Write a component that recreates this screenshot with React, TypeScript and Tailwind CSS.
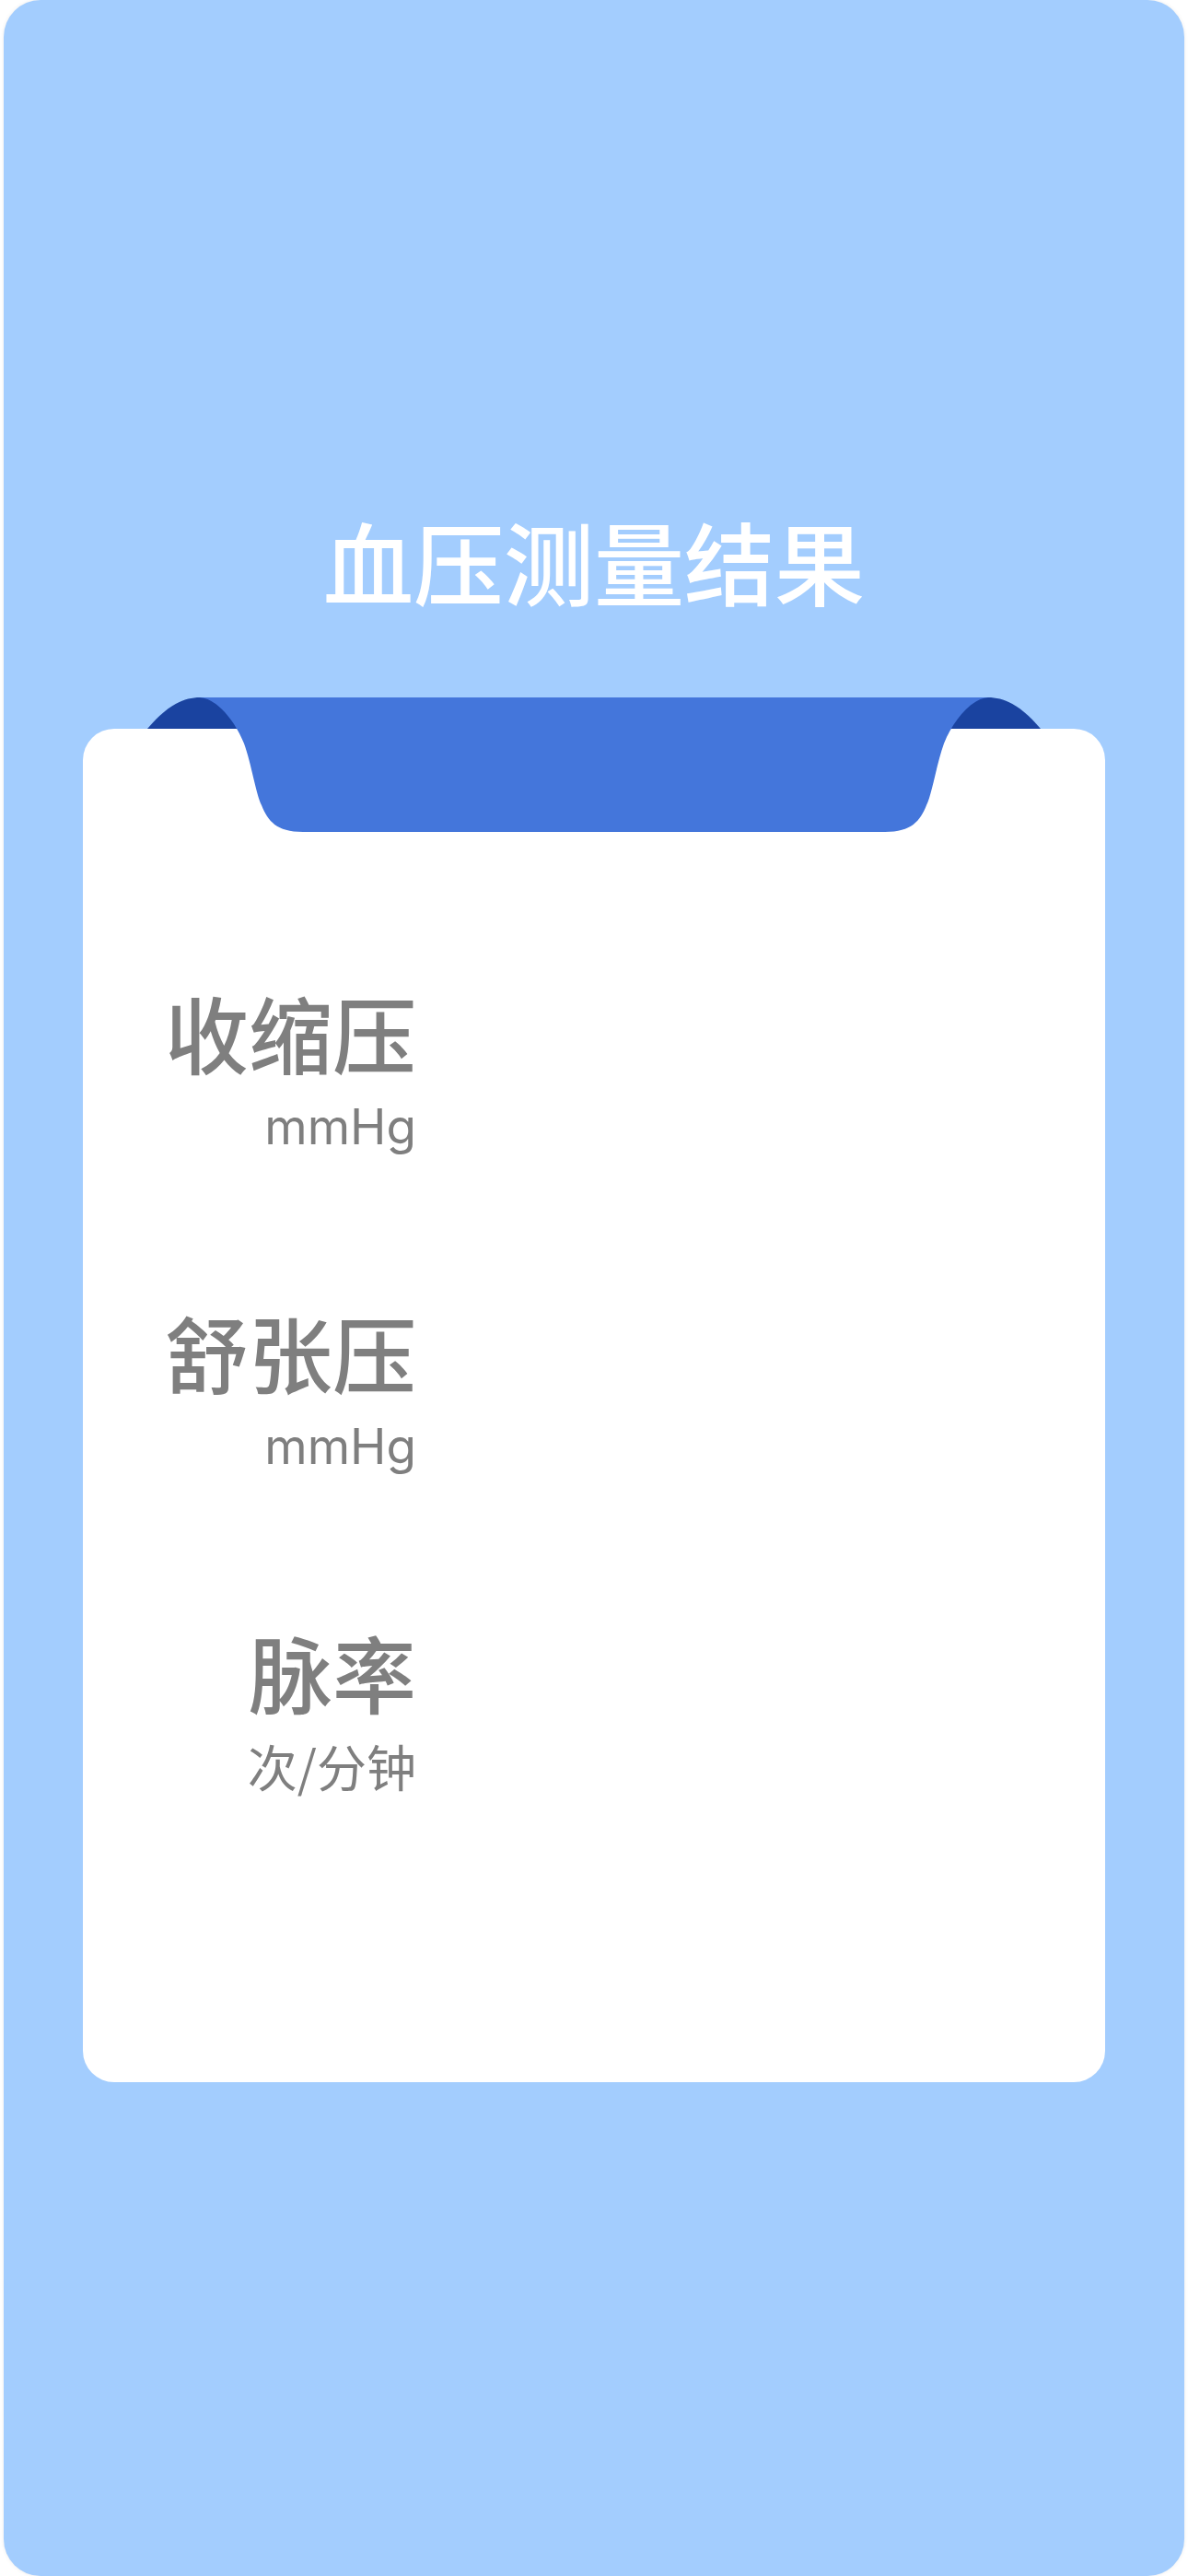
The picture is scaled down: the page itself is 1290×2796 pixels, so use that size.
import React from 'react'

const cjk = "font-['Noto_Sans_CJK_SC','Noto_Sans',sans-serif]"

const rows = [
  { label: '收缩压', unit: 'mmHg', latin: true },
  { label: '舒张压', unit: 'mmHg', latin: true },
  { label: '脉率', unit: '次/分钟', latin: false },
]

function Ribbon() {
  // curled tab lying over the top edge of the card
  return (
    <svg
      className="absolute left-[70px] top-[-34px]"
      width="970"
      height="146"
      viewBox="0 0 970 146"
    >
      <path d="M0 34 C22 8 40 0 57 0 L913 0 C930 0 948 8 970 34 Z" fill="#1a43a0" />
      <path
        d="M57 0 C75 1 95 25 105 50 C113 72 118 105 124 117 C131 134 140 146 169 146 L801 146 C830 146 839 134 846 117 C852 105 857 72 865 50 C875 25 895 1 913 0 Z"
        fill="#4476db"
      />
    </svg>
  )
}

export default function App() {
  return (
    <div className="min-h-screen bg-white">
      <div className="mx-[4px] h-[2796px] rounded-[40px] bg-[#a3cdfe] shadow-[0_0_4px_rgba(0,0,0,0.08)] pt-[558px] flex flex-col items-center">
        <h1 className={`${cjk} text-[98px] leading-[98px] font-medium text-white`}>
          血压测量结果
        </h1>

        <div className="relative mt-[135px] w-[1110px] h-[1469px] rounded-[34px] bg-white pt-[283px] flex flex-col gap-[168px]">
          <Ribbon />
          {rows.map((row) => (
            <div key={row.label} className="w-[362px] flex flex-col items-end gap-[29px] text-[#7f7f7f]">
              <div className={`${cjk} text-[91px] leading-[90px] font-medium`}>{row.label}</div>
              <div
                className={`${
                  row.latin ? "font-['Inter',sans-serif] text-[53px]" : `${cjk} text-[54px]`
                } leading-[60px]`}
              >
                {row.unit}
              </div>
            </div>
          ))}
        </div>
      </div>
    </div>
  )
}
